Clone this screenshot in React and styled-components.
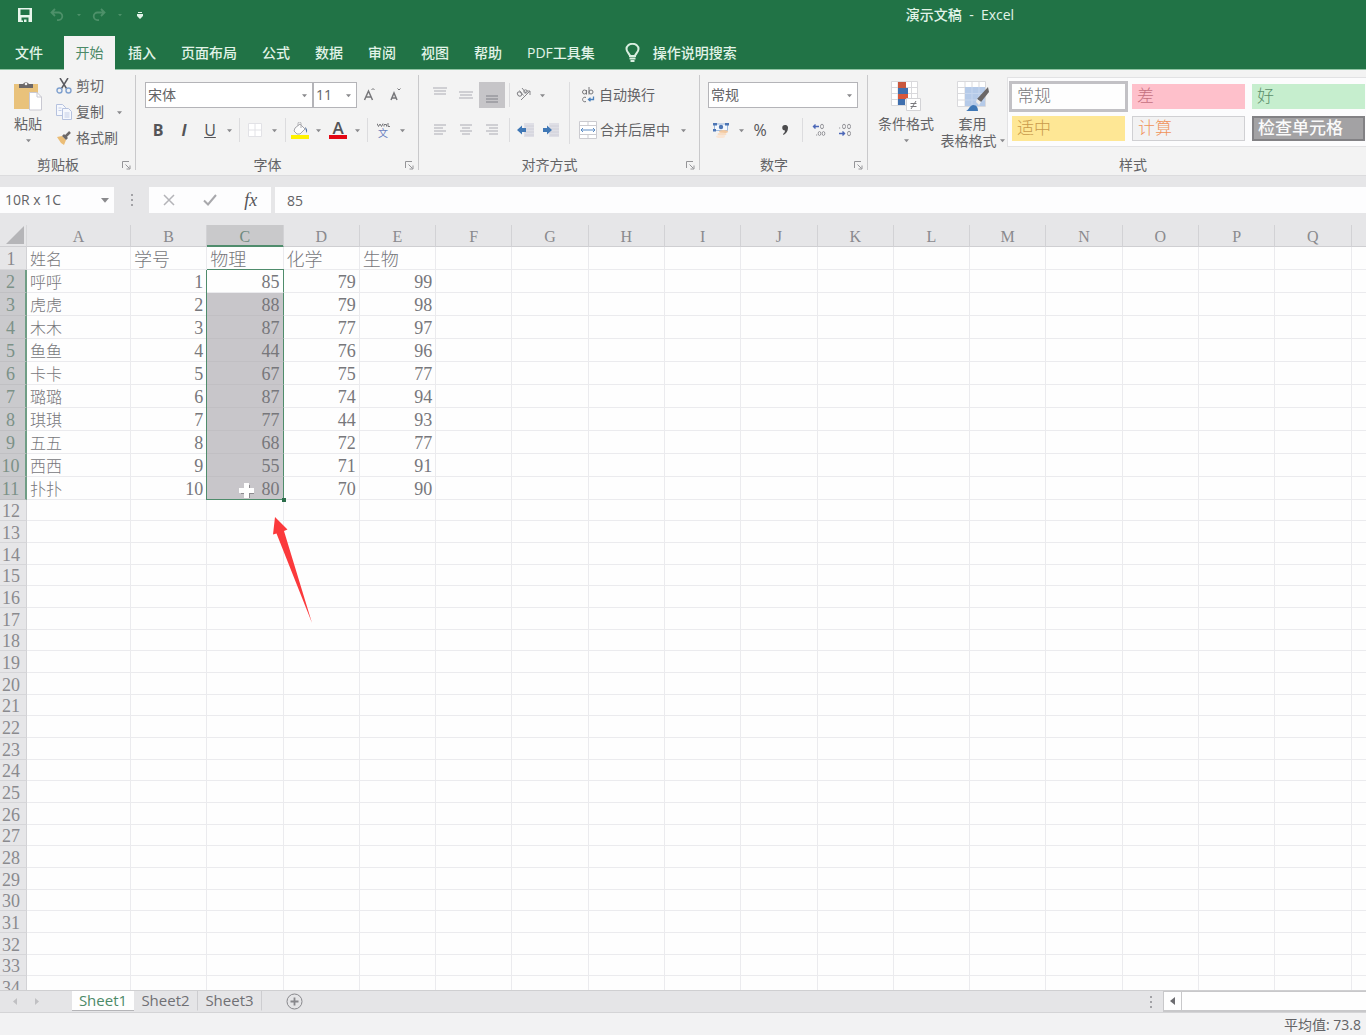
import React from "react";
import styled, { createGlobalStyle, css } from "styled-components";

const sans = `"Open Sans", "Noto Sans CJK SC", sans-serif`;
const serif = `"Liberation Serif", "Noto Sans CJK SC", serif`;

const GlobalStyle = createGlobalStyle`
  * { box-sizing: border-box; }
  html, body { margin: 0; }
  body { font: 14px/20px ${sans}; color: #636366; overflow: hidden; }
  button, input, select { font: inherit; color: inherit; margin: 0; padding: 0; border: 0; background: none; border-radius: 0; }
  svg { display: block; flex: none; }
`;

const Window = styled.div`
  display: flex;
  flex-direction: column;
  height: 100vh;
  background: #e6e6e8;
`;

/* ---------- title bar ---------- */
const TitleBar = styled.header`
  display: flex;
  align-items: center;
  height: 36px;
  padding: 0 0 6px 12px;
  background: #217346;
  color: #e2f3e8;
`;
const QuickButton = styled.button`
  display: flex;
  align-items: center;
  justify-content: center;
  width: ${(p) => p.$w || 26}px;
  height: 26px;
  color: ${(p) => (p.$dim ? "#4d9069" : "#e2f3e8")};
`;
const Title = styled.h1`
  flex: 1;
  margin: 0;
  padding-left: 398px;
  text-align: center;
  white-space: pre;
  font-size: 14px;
  line-height: 20px;
  font-weight: 500;
`;

/* ---------- ribbon tabs ---------- */
const TabRow = styled.nav`
  display: flex;
  height: 34px;
  background: #217346;
  box-shadow: inset 0 -1px #8fc4a3;
`;
const Tab = styled.button`
  display: flex;
  align-items: center;
  padding: ${(p) => (p.$file ? "0 21px 0 15px" : "0 12px 0 13px")};
  color: #e2f3e8;
  font-weight: 500;
  white-space: nowrap;
  ${(p) =>
    p.$active &&
    css`
      width: 51px;
      padding: 0;
      justify-content: center;
      background: #f3f3f3;
      color: #4c8a68;
      font-weight: 400;
    `}
`;
const TellMe = styled(Tab)`
  gap: 13px;
  padding-left: 18px;
`;

/* ---------- ribbon ---------- */
const Ribbon = styled.section`
  display: flex;
  height: 105px;
  background: #f3f3f3;
  box-shadow: 0 1px #dcdcde;
`;
const Group = styled.div`
  display: flex;
  flex-direction: column;
  flex: ${(p) => (p.$w ? `none` : 1)};
  width: ${(p) => (p.$w ? `${p.$w}px` : "auto")};
  min-width: 0;
  background: linear-gradient(#c9c9cb, #c9c9cb) right 5px / ${(p) => (p.$w ? 1 : 0)}px 95px no-repeat;
`;
const GroupBody = styled.div`
  display: flex;
  flex: 1;
  min-height: 0;
  padding: ${(p) => p.$pad || "12px 0 0 9px"};
`;
const GroupLabel = styled.div`
  display: flex;
  height: 20px;
  padding-left: ${(p) => p.$shift || 0}px;
`;
const LabelText = styled.span`
  flex: 1;
  text-align: center;
`;
const Launcher = styled.button`
  display: flex;
  align-items: center;
  justify-content: center;
  width: 20px;
  height: 20px;
`;
const Stack = styled.div`
  display: flex;
  flex-direction: column;
  gap: ${(p) => p.$gap ?? 10}px;
`;
const Row = styled.div`
  display: flex;
  align-items: center;
  height: ${(p) => p.$h || 26}px;
`;
const Tool = styled.button`
  display: flex;
  align-items: center;
  justify-content: center;
  flex: none;
  width: ${(p) => p.$w || 26}px;
  height: ${(p) => p.$h || 26}px;
  background: ${(p) => (p.$on ? "#c6c5c8" : "none")};
  color: #545457;
`;
const Glyph = styled.span`
  font-size: ${(p) => p.$size || 16}px;
  line-height: 20px;
  font-weight: ${(p) => (p.$bold ? 700 : 400)};
  font-style: ${(p) => (p.$italic ? "italic" : "normal")};
  text-decoration: ${(p) => (p.$under ? "underline" : "none")};
`;
const Divider = styled.span`
  flex: none;
  width: ${(p) => p.$w || 8}px;
  height: ${(p) => p.$h || 24}px;
  background: linear-gradient(#dcdcde, #dcdcde) center / 1px 100% no-repeat;
`;
const BigRow = styled.div`
  display: flex;
`;
const BigButton = styled.button`
  display: flex;
  flex-direction: column;
  align-items: center;
  width: ${(p) => p.$w}px;
  line-height: 17px;
`;
const BigIcon = styled.span`
  display: flex;
  align-items: center;
  height: 30px;
  margin: 8px 0 4px;
`;
const Inline = styled.span`
  display: flex;
  align-items: center;
  gap: 3px;
  height: 17px;
  white-space: nowrap;
`;
const LabelButton = styled.button`
  display: flex;
  align-items: center;
  gap: ${(p) => p.$gap || 4}px;
  height: 26px;
  padding-left: ${(p) => p.$pad || 0}px;
  white-space: nowrap;
`;
const Field = styled.div`
  display: grid;
  align-items: center;
  width: ${(p) => p.$w}px;
  height: 26px;
  border: 1px solid #b4b4b8;
  background: #fff;
  & > * { grid-area: 1 / 1; }
  & > svg { justify-self: end; margin-right: 5px; pointer-events: none; }
`;
const Select = styled.select`
  appearance: none;
  width: 100%;
  height: 24px;
  padding: 0 2px;
  outline: 0;
`;
const Gallery = styled.div`
  display: grid;
  flex: 1;
  grid-template-columns: repeat(3, 1fr);
  grid-template-rows: 25px 25px;
  gap: 7px;
  height: 70px;
  margin-top: 4px;
  padding: 6px 1px 6px 4px;
  border: 1px solid #e2e2e4;
  border-right: 0;
  background: #fcfcfd;
`;
const StyleCell = styled.button`
  padding: 0 5px;
  text-align: left;
  white-space: nowrap;
  font: ${(p) => (p.$bold ? 500 : 300)} 17px/20px ${serif};
  color: ${(p) => p.$fg};
  background: ${(p) => p.$bg};
  border: ${(p) => (p.$line ? `1px solid ${p.$line}` : 0)};
  box-shadow: ${(p) => (p.$on ? "0 0 0 3px #c2c1c5" : p.$bold ? `inset 0 0 0 1px ${p.$line}` : "none")};
`;

/* ---------- formula bar ---------- */
const FormulaBar = styled.div`
  display: flex;
  align-items: center;
  height: 50px;
  padding: 12px 0;
`;
const NameBox = styled.div`
  display: flex;
  align-items: center;
  width: 114px;
  height: 26px;
  padding: 0 5px;
  background: #fdfdfe;
`;
const NameInput = styled.input`
  flex: 1;
  min-width: 0;
  outline: 0;
`;
const Dots = styled.span`
  display: flex;
  align-items: center;
  justify-content: center;
  width: ${(p) => p.$w}px;
`;
const FormulaTools = styled.div`
  display: flex;
  justify-content: space-around;
  width: 122px;
  height: 26px;
  margin-right: 4px;
  background: #fdfdfe;
`;
const Fx = styled.span`
  font: italic 400 18px/20px "Liberation Serif", serif;
`;
const FormulaInput = styled.input`
  flex: 1;
  height: 26px;
  padding: 0 12px;
  outline: 0;
  background: #fdfdfe;
`;

/* ---------- sheet ---------- */
const SheetArea = styled.main`
  position: relative;
  flex: 1;
  min-height: 0;
  overflow: hidden;
`;
const Sheet = styled.table`
  table-layout: fixed;
  width: calc(100% + 62px);
  border-collapse: separate;
  border-spacing: 0;
  background: #fefefe;
  font: 300 16px/18px ${serif};
  color: #77777b;
`;
const HeadCol = styled.col`
  width: 27px;
`;
const WideCol = styled.col`
  width: 104px;
`;
const Corner = styled.td`
  height: 22px;
  padding: 0 2px 2px 0;
  background: #e6e6e8;
  border-right: 1px solid #d8d8da;
  border-bottom: 1px solid #cfcfd2;
  & svg { margin-left: auto; }
`;
const ColHead = styled.th`
  height: 22px;
  padding: 3px 0 0;
  font-weight: 400;
  color: ${(p) => (p.$on ? "#6f8a7e" : "#8a8a8e")};
  background: ${(p) => (p.$on ? "#c9c9cb" : "#e6e6e8")};
  border-right: 1px solid #d2d2d5;
  border-bottom: 1px solid ${(p) => (p.$on ? "#4f8c6c" : "#cfcfd2")};
  box-shadow: ${(p) => (p.$on ? "inset 0 -1px #4f8c6c" : "none")};
`;
const Line = styled.tr`
  height: ${(p) => p.$h}px;
`;
const RowHead = styled.th`
  padding: 2px 4px 0 0;
  font-size: 18px;
  font-weight: 400;
  text-align: center;
  color: ${(p) => (p.$on ? "#7b9187" : "#8a8a8e")};
  background: ${(p) => (p.$on ? "#cacacd" : "#e6e6e8")};
  border-right: ${(p) => (p.$on ? "2px solid #6f9d85" : "1px solid #d2d2d5")};
  border-bottom: 1px solid ${(p) => (p.$on ? "#c0c0c3" : "#d6d6d9")};
`;
const Cell = styled.td`
  position: relative;
  padding: ${(p) => (p.$num ? "2px 3px 0 0" : "3px 0 0 3px")};
  text-align: ${(p) => (p.$num ? "right" : "left")};
  font-size: ${(p) => p.$size || 16}px;
  border-right: 1px solid #ebebee;
  border-bottom: 1px solid #ebebee;
  white-space: nowrap;
  ${(p) =>
    p.$sel &&
    css`
      z-index: 1;
      background: ${p.$sel === "first" ? "#fefefe" : "#c8c6ca"};
      border-right-color: #4f8c6c;
      border-bottom-color: ${p.$sel === "last" ? "#4f8c6c" : p.$sel === "first" ? "#ebebee" : "#c1bfc3"};
      box-shadow: -1px 0 #4f8c6c${p.$sel === "first" ? ", 0 -1px #4f8c6c" : ""};
    `}
`;
const FillHandle = styled.span`
  position: absolute;
  right: -3px;
  bottom: -3px;
  width: 4px;
  height: 4px;
  background: #2c6e4b;
`;
const Cursor = styled.svg`
  position: absolute;
  left: 31px;
  top: 5px;
`;
const Pointer = styled.svg`
  position: absolute;
  left: 272px;
  top: 292px;
`;

/* ---------- bottom ---------- */
const SheetBar = styled.footer`
  display: flex;
  height: 23px;
  background: #e5e5e7;
  border-top: 1px solid #cfcfd1;
  border-bottom: 1px solid #d4d4d6;
`;
const SheetNav = styled.div`
  display: flex;
  align-items: center;
  gap: 18px;
  width: 72px;
  padding-left: 13px;
  color: #c0c0c3;
`;
const SheetTab = styled.button`
  width: ${(p) => (p.$on ? 62 : 64)}px;
  height: 20px;
  padding-bottom: 2px;
  font-size: 15px;
  line-height: 16px;
  color: ${(p) => (p.$on ? "#4c8a68" : "#707074")};
  background: ${(p) => (p.$on ? "#fefefe" : "none")};
  border-bottom: 1px solid ${(p) => (p.$on ? "#b5b5b8" : "transparent")};
  border-right: ${(p) => (p.$on ? "0" : "1px solid #cdcdd0")};
`;
const AddSheet = styled.button`
  display: flex;
  align-items: center;
  justify-content: center;
  width: 64px;
  height: 21px;
`;
const Spacer = styled.span`
  flex: 1;
`;
const ScrollBar = styled.div`
  display: flex;
  width: 203px;
  padding: 1px 0 2px;
  border-left: 1px solid #c8c8ca;
  background: #c8c8ca;
  gap: 1px;
`;
const ScrollButton = styled.button`
  display: flex;
  align-items: center;
  justify-content: center;
  width: 17px;
  background: #fefefe;
`;
const ScrollThumb = styled.span`
  flex: 1;
  background: #fefefe;
`;
const StatusBar = styled.div`
  height: 22px;
  padding: 2px 5px 0 0;
  text-align: right;
  background: #f2f2f3;
`;

/* ---------- icons ---------- */
const Caret = ({ s = 5, c = "#8a8a8d" }) => (
  <svg width={s} height={s} viewBox="0 0 6 6"><path d="M0 1.5h6L3 5z" fill={c} /></svg>
);
const LauncherIcon = () => (
  <svg width="9" height="9" viewBox="0 0 9 9" fill="none" stroke="#959598"><path d="M.5 7V.5H7M3.5 3.5l4 4M8 4.5V8H4.5" /></svg>
);
const SaveIcon = () => (
  <svg width="14" height="14" viewBox="0 0 14 14"><path fill="#e8f6ec" fillRule="evenodd" d="M0 0h14v14H0zM2.500 1.500V7h9V1.500zM3.500 9.500V12.500h1.500V14h1v-2.500h2.500V14h2V9.500z" /></svg>
);
const UndoIcon = ({ flip }) => (
  <svg width="14" height="14" viewBox="0 0 14 14" fill="none" stroke="currentColor" strokeWidth="1.800"><path transform={flip ? "translate(14) scale(-1 1)" : undefined} d="M5 1L1.500 4.500 5 8M2 4.500h6.500a3.800 3.800 0 0 1 0 7.600H7" /></svg>
);
const CustomizeIcon = () => (
  <svg width="6" height="7" viewBox="0 0 6 7" fill="#e2f3e8"><path d="M1 0h4v1H1zM0 2h6v2L3 7 0 4z" /></svg>
);
const BulbIcon = () => (
  <svg width="15" height="20" viewBox="0 0 15 20" fill="none" stroke="#d9eee0" strokeWidth="2"><path d="M5 13c0-2-3.500-3.500-3.500-7a6 5.200 0 0 1 12 0c0 3.500-3.500 5-3.500 7z" /><path d="M4.500 15.500h6M5.500 18h4" /></svg>
);
const PasteIcon = () => (
  <svg width="30" height="30" viewBox="0 0 30 30"><path fill="#e9c27b" d="M1 3h24v25H1z" /><path fill="#6c6868" d="M6 7V3h4a3.500 3.500 0 0 1 6 0h4v4z" /><circle cx="13" cy="3" r="1.300" fill="#f3f3f3" /><path fill="#fff" stroke="#c9c9d2" d="M16.500 11.500H24l4.500 4.500v13H16.500z" /><path fill="none" stroke="#c9c9d2" d="M24 11.500V16h4.500" /></svg>
);
const CutIcon = () => (
  <svg width="16" height="16" viewBox="0 0 16 16" fill="none"><path stroke="#5a5a60" strokeWidth="1.500" d="M4 0l6.500 10.500M12 0L5.500 10.500" /><circle cx="3.500" cy="12.500" r="2.500" stroke="#7fa0cf" strokeWidth="1.400" /><circle cx="12.500" cy="12.500" r="2.500" stroke="#7fa0cf" strokeWidth="1.400" /></svg>
);
const CopyIcon = () => (
  <svg width="16" height="16" viewBox="0 0 16 16" fill="#f6f8fd" stroke="#b6c2df"><path d="M.5.5h6l3 3v8h-9z" /><path d="M6.500 4.500h6l3 3v8h-9z" /><path d="M2.500 4h3M2.500 6.500h3M8.500 9h5M8.500 11h5M8.500 13h5" stroke="#c3cde6" /></svg>
);
const BrushIcon = () => (
  <svg width="14" height="14" viewBox="0 0 14 14"><path d="M0 6l5-1 4 4-2 5-3-2-2-3z" fill="#ebbd76" /><path d="M5 5l2-2 4 4-2 2z" fill="#6c6868" /><path d="M8.500 5.500L13 1" stroke="#6c6868" strokeWidth="2.500" /></svg>
);
const SizeIcon = ({ down }) => (
  <svg width="14" height="16" viewBox="0 0 14 16" fill="none" stroke="#77777a" strokeWidth="1.500"><path d={down ? "M2 13L5 6l3 7M3.300 11h3.400" : "M1.500 13L5.500 4l4 9M3 10h5"} /><path d={down ? "M8.500 1.500L10 3l1.500-1.500" : "M8.500 3L10 1.500 11.500 3"} strokeWidth="1" /></svg>
);
const BorderIcon = () => (
  <svg width="14" height="14" viewBox="0 0 14 14" fill="#fff" stroke="#e2e2e6"><path d="M.5.500h13v13H.5zM7 .5v13M.5 7h13" /></svg>
);
const FillIcon = () => (
  <svg width="18" height="17" viewBox="0 0 18 17"><path d="M4 6l5-4 5 5-5 5H6L3 9z" fill="#fdfdfd" stroke="#a5a5aa" /><path d="M7 4V1.500a1.500 1.500 0 0 1 3 0V6" fill="none" stroke="#b0b0b4" /><path d="M14 5c3 2 2 5 1.500 6z" fill="#52719e" /><path d="M0 13h18v4H0z" fill="#fff200" /></svg>
);
const ColorBar = styled.span`
  width: 18px;
  height: 18px;
  border-bottom: 4px solid #e30613;
  font: 600 17px/14px ${sans};
`;
const Phonetic = styled.span`
  display: flex;
  flex-direction: column;
  align-items: center;
  font-size: 10px;
  line-height: 10px;
  color: #6a7fc0;
  & svg { margin-bottom: 1px; }
`;
const AlignIcon = ({ w, y = 1 }) => (
  <svg width="14" height="16" viewBox="0 0 14 16" stroke="#cfcfd3" strokeWidth="2">
    {w.map(([a, b], i) => <path key={i} d={`M${a} ${y + i * 3}H${b}`} />)}
  </svg>
);
const BottomAlignIcon = () => (
  <svg width="14" height="16" viewBox="0 0 14 16" stroke="#a3a3a8" strokeWidth="2"><path d="M1 9h12M1 12h12M1 15h12" /></svg>
);
const OrientIcon = () => (
  <svg width="16" height="16" viewBox="0 0 16 16" fill="none" stroke="#858589"><path d="M5 13L14 4M10 4h4v4" /><ellipse cx="3.500" cy="7" rx="1.800" ry="2.300" transform="rotate(-45 3.500 7)" /><path d="M3.500 3.500l4 5M6 1l4 5" /><circle cx="9.500" cy="4.500" r="1.700" /></svg>
);
const IndentIcon = ({ right }) => (
  <svg width="17" height="14" viewBox="0 0 17 14"><path d="M7 0h10v14H7z" fill="#dfdfe6" /><path d="M8 3h9M8 6h9M8 9h9M8 12h9" stroke="#d0d0d9" /><path transform={right ? "translate(10) scale(-1 1)" : undefined} d="M0 7l5-4.500V5h4v4H5v2.500z" fill="#3f77b5" /></svg>
);
const WrapIcon = () => (
  <svg width="14" height="16" viewBox="0 0 14 16" fill="none" stroke="#77777b"><circle cx="3.500" cy="5" r="2" /><path d="M5.500 3v4.500M8 0v7.500" /><circle cx="10" cy="5" r="2" /><path d="M5 10.500a2.300 2.300 0 1 0 0 4" /><path d="M12.500 9.500v3H8M9.500 10.800L7.500 12.500l2 1.800" stroke="#4d82bd" strokeWidth="1.300" /></svg>
);
const MergeIcon = () => (
  <svg width="18" height="18" viewBox="0 0 18 18" fill="none" stroke="#cbcbd0"><path fill="#fff" d="M.5.500h17v17H.5z" /><path d="M.5 4.500h17M.5 13.500h17M9 .5v4M9 13.500v4" /><path d="M2 9h14M4 7L2 9l2 2M14 7l2 2-2 2" stroke="#5a8bc4" /></svg>
);
const MoneyIcon = () => (
  <svg width="16" height="17" viewBox="0 0 16 17"><path d="M1.500 2h13v6.500h-13z" fill="#f4f8fd" stroke="#9db9dd" /><path d="M0 1h4v2.500H0zM12 1h4v2.500h-4zM0 7h3v2.500H0z" fill="#4d76b5" /><circle cx="8" cy="5" r="2.200" fill="#4d76b5" /><ellipse cx="10.500" cy="9.500" rx="4.500" ry="1.600" fill="#f3c9a0" /><ellipse cx="9" cy="12" rx="4.500" ry="1.600" fill="#f8ddc4" /><ellipse cx="7.500" cy="14.500" rx="4.500" ry="1.600" fill="#fae6d5" /></svg>
);
const DecimalIcon = ({ less }) => (
  <svg width="14" height="14" viewBox="0 0 14 14" fill="none" stroke="#96969b">
    {less ? (
      <>
        <path d="M1 5h1.200" /><ellipse cx="6" cy="3.500" rx="1.500" ry="2.300" /><ellipse cx="11" cy="3.500" rx="1.500" ry="2.300" /><ellipse cx="11" cy="10.500" rx="1.500" ry="2.300" />
        <path d="M1 10.500h5M4.500 8.500l2 2-2 2" stroke="#4d68b8" strokeWidth="1.400" />
      </>
    ) : (
      <>
        <ellipse cx="10" cy="3.500" rx="1.500" ry="2.300" /><path d="M4 12h1.200" /><ellipse cx="7.500" cy="10.500" rx="1.300" ry="2" /><ellipse cx="11.500" cy="10.500" rx="1.300" ry="2" />
        <path d="M7 3.500H2M3.500 1.500l-2 2 2 2" stroke="#4d68b8" strokeWidth="1.400" />
      </>
    )}
  </svg>
);
const CommaIcon = () => (
  <svg width="6" height="10" viewBox="0 0 6 10"><path d="M3 0a2.700 2.700 0 0 1 3 3c0 3.500-2 5.500-4.500 7L1 9c1.300-1 2-2 2-3.500A2.700 2.700 0 0 1 3 0z" fill="#4b4b4d" /></svg>
);
const CondIcon = () => (
  <svg width="31" height="30" viewBox="0 0 31 30"><path d="M.5.500h26v24H.5zM7 .5v24M14 .5v24M20.500 .5v24M.5 6.500h26M.5 12.500h26M.5 18.500h26" fill="#fff" stroke="#d9d9dc" /><path d="M7 1h8v6H7z" fill="#c9573d" /><path d="M7 7h10v6H7z" fill="#3f6fae" /><path d="M7 13h10v5H7z" fill="#d9583b" /><path d="M7 18h7v6H7z" fill="#3f6fae" /><path d="M15.500 17.500h14v12h-14z" fill="#fff" stroke="#d3d3d6" /><path d="M19.500 22.500h6M19.500 25.500h6M25 20l-5 8" stroke="#77777b" /></svg>
);
const TableFormatIcon = () => (
  <svg width="32" height="30" viewBox="0 0 32 30"><path d="M.5.500h28v25H.5zM8 .5v25M15 .5v25M22 .5v25M.5 6.500h28M.5 12.500h28M.5 19h28" fill="#fff" stroke="#d9d9dc" /><path d="M8 6h20v19H8z" fill="#b5cae8" /><path d="M15 6v19M22 6v19M8 12.500h20M8 19h20" stroke="#c6d6ee" /><path d="M31 6l1 5-8 10-4-3z" fill="#6b6767" /><path d="M20 18l4 3-2 3-3-3z" fill="#f1ede8" /><path d="M9 30c3-1 3-5 7-6 4 0 5 3 5 6z" fill="#3f77b5" /></svg>
);
const DotsIcon = () => (
  <svg width="2" height="12" viewBox="0 0 2 12" fill="#a2a2a6"><path d="M0 0h2v2H0zM0 5h2v2H0zM0 10h2v2H0z" /></svg>
);

const columns = "ABCDEFGHIJKLMNOPQ".split("").concat("");
const data = [
  ["姓名", "学号", "物理", "化学", "生物"],
  ["呼呼", 1, 85, 79, 99],
  ["虎虎", 2, 88, 79, 98],
  ["木木", 3, 87, 77, 97],
  ["鱼鱼", 4, 44, 76, 96],
  ["卡卡", 5, 67, 75, 77],
  ["璐璐", 6, 87, 74, 94],
  ["琪琪", 7, 77, 44, 93],
  ["五五", 8, 68, 72, 77],
  ["西西", 9, 55, 71, 91],
  ["扑扑", 10, 80, 70, 90],
];
const rowHeight = (n) => {
  if (n <= 11) return 23;
  return n % 3 === 0 ? 21 : 22;
};
const selection = (n, c) => {
  if (c !== 2 || n < 2 || n > 11) return undefined;
  return n === 2 ? "first" : n === 11 ? "last" : "mid";
};

function LabelRow({ children, shift, launcher = true }) {
  return (
    <GroupLabel $shift={shift}>
      <LabelText>{children}</LabelText>
      {launcher && <Launcher aria-label={`${children}设置`}><LauncherIcon /></Launcher>}
    </GroupLabel>
  );
}

function Picker({ w, label, value }) {
  return (
    <Field $w={w}>
      <Select aria-label={label} defaultValue={value}><option>{value}</option></Select>
      <Caret />
    </Field>
  );
}

const Drop = ({ w = 14, label }) => <Tool $w={w} aria-label={label}><Caret /></Tool>;

export default function App() {
  return (
    <Window>
      <GlobalStyle />
      <TitleBar>
        <QuickButton aria-label="保存"><SaveIcon /></QuickButton>
        <QuickButton $w={38} $dim aria-label="撤消"><UndoIcon /></QuickButton>
        <QuickButton $w={6} $dim aria-label="撤消列表"><Caret s={4} c="#4d9069" /></QuickButton>
        <QuickButton $w={34} $dim aria-label="恢复"><UndoIcon flip /></QuickButton>
        <QuickButton $w={8} $dim aria-label="恢复列表"><Caret s={4} c="#4d9069" /></QuickButton>
        <QuickButton $w={32} aria-label="自定义快速访问工具栏"><CustomizeIcon /></QuickButton>
        <Title>{"演示文稿  -  Excel"}</Title>
      </TitleBar>
      <TabRow>
        <Tab $file>文件</Tab>
        <Tab $active>开始</Tab>
        {["插入", "页面布局", "公式", "数据", "审阅", "视图", "帮助", "PDF工具集"].map((t) => <Tab key={t}>{t}</Tab>)}
        <TellMe><BulbIcon />操作说明搜索</TellMe>
      </TabRow>

      <Ribbon>
        <Group $w={136}>
          <GroupBody $pad="3px 0 0 0">
            <BigButton $w={56}>
              <BigIcon><PasteIcon /></BigIcon>
              <Inline>粘贴</Inline>
              <Inline><Caret /></Inline>
            </BigButton>
            <Stack $gap={0}>
              <LabelButton><CutIcon />剪切</LabelButton>
              <Row><LabelButton><CopyIcon />复制</LabelButton><Drop w={31} label="复制选项" /></Row>
              <LabelButton $gap={5} $pad={1}><BrushIcon />格式刷</LabelButton>
            </Stack>
          </GroupBody>
          <LabelRow>剪贴板</LabelRow>
        </Group>

        <Group $w={283}>
          <GroupBody>
            <Stack>
              <Row>
                <Picker w={168} label="字体" value="宋体" />
                <Picker w={44} label="字号" value="11" />
                <Tool aria-label="增大字号"><SizeIcon /></Tool>
                <Tool aria-label="减小字号"><SizeIcon down /></Tool>
              </Row>
              <Row $h={24}>
                <Tool><Glyph $bold>B</Glyph></Tool>
                <Tool><Glyph $bold $italic>I</Glyph></Tool>
                <Tool><Glyph $under>U</Glyph></Tool>
                <Drop w={12} label="下划线" />
                <Divider />
                <Tool $w={24} aria-label="边框"><BorderIcon /></Tool>
                <Drop label="边框选项" />
                <Divider />
                <Tool $w={22} aria-label="填充颜色"><FillIcon /></Tool>
                <Drop label="填充颜色选项" />
                <Tool aria-label="字体颜色"><ColorBar>A</ColorBar></Tool>
                <Drop w={12} label="字体颜色选项" />
                <Divider />
                <Tool $w={24} aria-label="拼音">
                  <Phonetic>
                    <svg width="13" height="4" viewBox="0 0 13 4" fill="none" stroke="#77777b"><path d="M0 .5l1.500 3L3 1l1.500 2.500L6 .5M7 3.500V1.500h2.500v2M11 0v3.500h2" /></svg>
                    文
                  </Phonetic>
                </Tool>
                <Drop label="拼音选项" />
              </Row>
            </Stack>
          </GroupBody>
          <LabelRow>字体</LabelRow>
        </Group>

        <Group $w={281}>
          <GroupBody $pad="12px 0 0 8px">
            <Stack>
              <Row>
                <Tool aria-label="顶端对齐"><AlignIcon y={1} w={[[0, 14], [1, 13], [1, 13]]} /></Tool>
                <Tool aria-label="垂直居中"><AlignIcon y={5} w={[[0, 14], [1, 13], [0, 14]]} /></Tool>
                <Tool $on aria-label="底端对齐"><BottomAlignIcon /></Tool>
                <Divider />
                <Tool $w={22} aria-label="方向"><OrientIcon /></Tool>
                <Drop label="方向选项" />
              </Row>
              <Row $h={24}>
                <Tool aria-label="左对齐"><AlignIcon y={3} w={[[1, 13], [1, 10], [1, 13], [1, 10]]} /></Tool>
                <Tool aria-label="居中"><AlignIcon y={3} w={[[1, 13], [3, 11], [1, 13], [3, 11]]} /></Tool>
                <Tool aria-label="右对齐"><AlignIcon y={3} w={[[1, 13], [4, 13], [1, 13], [4, 13]]} /></Tool>
                <Divider />
                <Tool $w={24} aria-label="减少缩进"><IndentIcon /></Tool>
                <Tool aria-label="增加缩进"><IndentIcon right /></Tool>
              </Row>
            </Stack>
            <Divider $w={12} $h={62} />
            <Stack>
              <LabelButton $pad={6}><WrapIcon />自动换行</LabelButton>
              <Row $h={24}><LabelButton $gap={3} $pad={4}><MergeIcon />合并后居中</LabelButton><Drop w={26} label="合并选项" /></Row>
            </Stack>
          </GroupBody>
          <LabelRow>对齐方式</LabelRow>
        </Group>

        <Group $w={168}>
          <GroupBody $pad="12px 0 0 8px">
            <Stack>
              <Picker w={150} label="数字格式" value="常规" />
              <Row $h={24}>
                <Tool aria-label="会计数字格式"><MoneyIcon /></Tool>
                <Drop label="会计选项" />
                <Tool $w={24}><Glyph>%</Glyph></Tool>
                <Tool aria-label="千位分隔样式"><CommaIcon /></Tool>
                <Divider />
                <Tool aria-label="增加小数位数"><DecimalIcon /></Tool>
                <Tool aria-label="减少小数位数"><DecimalIcon less /></Tool>
              </Row>
            </Stack>
          </GroupBody>
          <LabelRow>数字</LabelRow>
        </Group>

        <Group>
          <GroupBody $pad="3px 0 0 6px">
            <BigRow>
              <BigButton $w={64}>
                <BigIcon><CondIcon /></BigIcon>
                <Inline>条件格式</Inline>
                <Inline><Caret /></Inline>
              </BigButton>
              <BigButton $w={69}>
                <BigIcon><TableFormatIcon /></BigIcon>
                <Inline>套用</Inline>
                <Inline>表格格式<Caret /></Inline>
              </BigButton>
            </BigRow>
            <Gallery>
              <StyleCell $on $bg="#fefefe" $fg="#77777a">常规</StyleCell>
              <StyleCell $bg="#fec0cb" $fg="#c4707f">差</StyleCell>
              <StyleCell $bg="#c6eece" $fg="#5c8f6a">好</StyleCell>
              <StyleCell $bg="#fee795" $fg="#c99a4c">适中</StyleCell>
              <StyleCell $bg="#f2f2f3" $fg="#f0935a" $line="#d0d0d3">计算</StyleCell>
              <StyleCell $bold $bg="#a3a2a4" $fg="#fafafa" $line="#828184">检查单元格</StyleCell>
            </Gallery>
          </GroupBody>
          <LabelRow shift={32} launcher={false}>样式</LabelRow>
        </Group>
      </Ribbon>

      <FormulaBar>
        <NameBox>
          <NameInput aria-label="名称框" defaultValue="10R x 1C" />
          <Caret s={8} />
        </NameBox>
        <Dots $w={35}><DotsIcon /></Dots>
        <FormulaTools>
          <Tool $w={40} aria-label="取消"><svg width="12" height="12" viewBox="0 0 12 12" stroke="#b4b4b8" strokeWidth="1.500"><path d="M1 1l10 10M11 1L1 11" /></svg></Tool>
          <Tool $w={40} aria-label="输入"><svg width="14" height="12" viewBox="0 0 14 12" fill="none" stroke="#a8a8ac" strokeWidth="2"><path d="M1 6.500L5 10.500 13 1" /></svg></Tool>
          <Tool $w={40} aria-label="插入函数"><Fx>fx</Fx></Tool>
        </FormulaTools>
        <FormulaInput aria-label="编辑栏" defaultValue="85" />
      </FormulaBar>

      <SheetArea>
        <Sheet>
          <colgroup>
            <HeadCol />
            <WideCol />
            {columns.slice(1).map((c) => <col key={c} />)}
          </colgroup>
          <thead>
            <tr>
              <Corner><svg width="18" height="18" viewBox="0 0 18 18"><path d="M18 0v18H0z" fill="#b5b5b8" /></svg></Corner>
              {columns.map((c) => <ColHead key={c} $on={c === "C"}>{c}</ColHead>)}
            </tr>
          </thead>
          <tbody>
            {Array.from({ length: 34 }, (_, i) => i + 1).map((n) => (
              <Line key={n} $h={rowHeight(n)}>
                <RowHead $on={n > 1 && n < 12}>{n}</RowHead>
                {columns.map((c, j) => {
                  const v = data[n - 1]?.[j];
                  const num = typeof v === "number";
                  const sel = selection(n, j);
                  return (
                    <Cell key={c} $num={num} $sel={sel} $size={num || (n === 1 && j > 0) ? 18 : 16}>
                      {v}
                      {sel === "last" && (
                        <>
                          <Cursor width="17" height="17" viewBox="0 0 17 17"><path d="M6 2h5v4h4v5h-4v4H6v-4H2V6h4z" fill="#8c8a8e" transform="translate(1 1)" /><path d="M6 1h5v5h5v5h-5v5H6v-5H1V6h5z" fill="#fefefe" /></Cursor>
                          <FillHandle />
                        </>
                      )}
                    </Cell>
                  );
                })}
              </Line>
            ))}
          </tbody>
        </Sheet>
        <Pointer width="42" height="107" viewBox="0 0 42 107"><path d="M3 0L15.500 12.500 12 14 40 106 4.500 16.500 1 17.500z" fill="#fb3a3c" /></Pointer>
      </SheetArea>

      <SheetBar>
        <SheetNav>
          <svg width="4" height="7" viewBox="0 0 4 7"><path d="M4 0v7L0 3.500z" fill="currentColor" /></svg>
          <svg width="4" height="7" viewBox="0 0 4 7"><path d="M0 0v7l4-3.500z" fill="currentColor" /></svg>
        </SheetNav>
        <SheetTab $on>Sheet1</SheetTab>
        <SheetTab>Sheet2</SheetTab>
        <SheetTab>Sheet3</SheetTab>
        <AddSheet aria-label="新工作表"><svg width="17" height="17" viewBox="0 0 17 17" fill="none" stroke="#88888c"><circle cx="8.500" cy="8.500" r="7.500" /><path d="M4.500 8.500h8M8.500 4.500v8" strokeWidth="1.800" /></svg></AddSheet>
        <Spacer />
        <Dots $w={24}><DotsIcon /></Dots>
        <ScrollBar>
          <ScrollButton aria-label="向左滚动"><svg width="5" height="8" viewBox="0 0 5 8"><path d="M5 0v8L0 4z" fill="#6c6c70" /></svg></ScrollButton>
          <ScrollThumb />
        </ScrollBar>
      </SheetBar>
      <StatusBar>平均值: 73.8</StatusBar>
    </Window>
  );
}
